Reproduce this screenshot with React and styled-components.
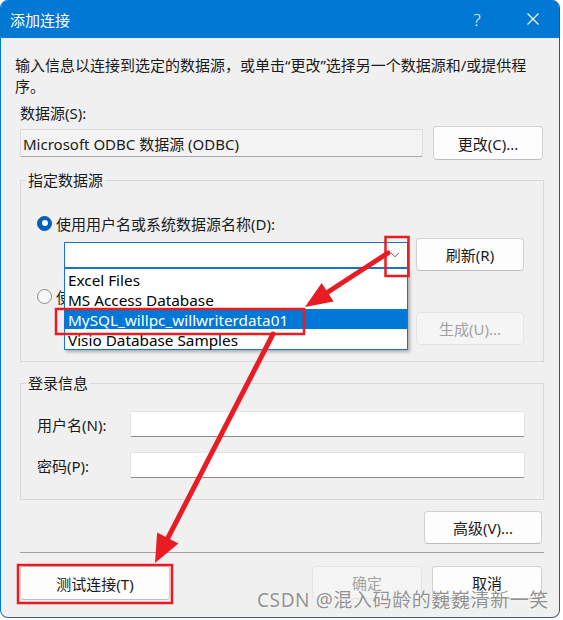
import React from "react";
import styled, { createGlobalStyle } from "styled-components";

const GlobalStyle = createGlobalStyle`
  html, body {
    margin: 0;
    padding: 0;
    background: #ffffff;
  }
  body {
    font-family: "Segoe UI", "Noto Sans", "Noto Sans CJK SC", sans-serif;
    color: #1b1b1b;
  }
`;

const Page = styled.div`
  position: relative;
  width: 563px;
  height: 620px;
`;

const Window = styled.div`
  width: 560px;
  height: 618px;
  box-sizing: border-box;
  display: flex;
  flex-direction: column;
  background: #f0f0f0;
  border: 1px solid #0078d4;
  border-top: none;
  border-right-color: #4d4d4d;
  border-bottom-color: #3c5f86;
  border-radius: 8px;
  overflow: hidden;
`;

const TitleBar = styled.div`
  height: 38px;
  flex: none;
  display: flex;
  align-items: center;
  background: #0078d4;
  color: #ffffff;
  padding-left: 10px;
  margin: 0 -1px;
`;

const TitleText = styled.div`
  font-size: 15px;
  line-height: 20px;
  margin-top: 1px;
`;

const CaptionButton = styled.div`
  width: 46px;
  height: 38px;
  display: flex;
  align-items: center;
  justify-content: center;
  margin-left: ${(p) => p.$gap || 0}px;
  margin-right: ${(p) => p.$right || 0}px;
  font-size: 17px;
  font-weight: 300;
`;

const Body = styled.div`
  flex: 1;
  padding: 0 15px 0 19px;
  font-size: 15px;
`;

const Description = styled.div`
  width: 518px;
  margin: 17px 0 0 -5px;
  line-height: 21px;
`;

const FieldLabel = styled.div`
  margin-top: 6px;
  line-height: 21px;
`;

const SourceRow = styled.div`
  margin-top: 2px;
  height: 34px;
  display: flex;
  align-items: center;
  gap: 10px;
`;

const ReadonlyField = styled.div`
  width: 403px;
  height: 28px;
  box-sizing: border-box;
  padding-left: 2px;
  display: flex;
  align-items: center;
  background: #f3f3f3;
  border: 1px solid #dadada;
  border-bottom-color: #a8a8a8;
  border-radius: 2px;
`;

const Button = styled.div`
  width: ${(p) => p.$width}px;
  height: ${(p) => p.$height || 33}px;
  box-sizing: border-box;
  display: flex;
  align-items: center;
  justify-content: center;
  background: ${(p) => (p.$disabled ? "#f5f5f5" : "#fdfdfd")};
  color: ${(p) => (p.$disabled ? "#a2a2a2" : "#1b1b1b")};
  border: 1px solid ${(p) => (p.$disabled ? "#e3e3e3" : "#d0d0d0")};
  border-bottom-color: ${(p) => (p.$disabled ? "#e3e3e3" : "#bdbdbd")};
  border-radius: 4px;
  font-size: 15px;
  margin-right: ${(p) => p.$right || 0}px;
`;

const GroupBox = styled.fieldset`
  margin: ${(p) => p.$top}px 0 0;
  padding: 0;
  min-width: 0;
  border: 1px solid #d9d9d9;
`;

const GroupLegend = styled.legend`
  margin-left: 5px;
  padding: 0 2px;
  line-height: 22px;
  font-size: 15px;
`;

const GroupInner = styled.div`
  padding: ${(p) => p.$pad};
`;

const RadioRow = styled.div`
  margin-top: ${(p) => p.$top || 0}px;
  height: 22px;
  display: flex;
  align-items: center;
  gap: 4px;
  white-space: nowrap;
`;

const RadioDot = styled.span`
  width: 15px;
  height: 15px;
  box-sizing: border-box;
  border-radius: 50%;
  flex: none;
  background: ${(p) => (p.$checked ? "#005fb8" : "#f7f7f7")};
  border: 1px solid ${(p) => (p.$checked ? "#005fb8" : "#8a8a8a")};
  display: flex;
  align-items: center;
  justify-content: center;

  &::after {
    content: "";
    display: ${(p) => (p.$checked ? "block" : "none")};
    width: 6px;
    height: 6px;
    border-radius: 50%;
    background: #ffffff;
  }
`;

const ComboRow = styled.div`
  margin-top: 4px;
  height: 33px;
  display: flex;
  align-items: flex-start;
  padding-left: 27px;
  gap: 8px;
`;

const ComboWrap = styled.div`
  position: relative;
  margin-top: 4px;
  width: 344px;
`;

const ComboBox = styled.div`
  height: 26px;
  box-sizing: border-box;
  background: #ffffff;
  border: 1px solid #1a73c9;
  display: flex;
  align-items: center;
  justify-content: flex-end;
  padding-right: 7px;
`;

const DropList = styled.div`
  position: absolute;
  z-index: 5;
  left: 0;
  top: 26px;
  width: 344px;
  box-sizing: border-box;
  background: #ffffff;
  border: 1px solid #1a73c9;
  box-shadow: 2px 2px 3px rgba(0, 0, 0, 0.28);
`;

const DropItem = styled.div`
  height: 20px;
  box-sizing: border-box;
  padding: 1px 0 0 3px;
  line-height: 20px;
  font-size: 15.3px;
  white-space: nowrap;
  background: ${(p) => (p.$selected ? "#0078d7" : "transparent")};
  color: ${(p) => (p.$selected ? "#ffffff" : "#000000")};
`;

const ActionRow = styled.div`
  margin-top: ${(p) => p.$top || 0}px;
  display: flex;
  justify-content: ${(p) => p.$justify || "flex-end"};
  gap: 10px;
`;

const FormRow = styled.div`
  margin-top: ${(p) => p.$top}px;
  height: 26px;
  display: flex;
  align-items: center;
`;

const FormLabel = styled.div`
  width: 93px;
  flex: none;
`;

const TextInput = styled.div`
  width: 395px;
  height: 26px;
  box-sizing: border-box;
  background: #ffffff;
  border: 1px solid #e4e4e4;
  border-bottom-color: #8c8c8c;
  border-radius: 2px;
`;

const Separator = styled.div`
  margin-top: 8px;
  height: 1px;
  background: #a0a0a0;
`;

const Spacer = styled.div`
  flex: 1;
`;

const Watermark = styled.div`
  position: absolute;
  left: 257px;
  top: 589px;
  font-size: 19px;
  line-height: 22px;
  letter-spacing: 0.6px;
  white-space: nowrap;
  color: rgba(105, 105, 105, 0.72);
  text-shadow: 0 0 2px rgba(255, 255, 255, 0.9);
`;

const Annotations = styled.svg`
  position: absolute;
  left: 0;
  top: 0;
  pointer-events: none;
  z-index: 10;
`;

const RED = "#e91c24";

function Arrow({ x1, y1, x2, y2, len, half }) {
  const dx = x2 - x1;
  const dy = y2 - y1;
  const l = Math.hypot(dx, dy);
  const ux = dx / l;
  const uy = dy / l;
  const bx = x2 - ux * len;
  const by = y2 - uy * len;
  const px = -uy;
  const py = ux;
  const pts = `${x2},${y2} ${bx + px * half},${by + py * half} ${bx - px * half},${by - py * half}`;
  return (
    <g>
      <line x1={x1} y1={y1} x2={bx} y2={by} stroke={RED} strokeWidth="5" strokeLinecap="round" />
      <polygon points={pts} fill={RED} />
    </g>
  );
}

export default function App() {
  return (
    <Page>
      <GlobalStyle />
      <Window>
        <TitleBar>
          <TitleText>添加连接</TitleText>
          <Spacer />
          <CaptionButton>?</CaptionButton>
          <CaptionButton $gap={10} $right={4}>
            <svg width="12" height="12" viewBox="0 0 12 12">
              <path d="M0.5 0.5 L11.5 11.5 M11.5 0.5 L0.5 11.5" stroke="#ffffff" strokeWidth="1.1" fill="none" />
            </svg>
          </CaptionButton>
        </TitleBar>

        <Body>
          <Description>
            输入信息以连接到选定的数据源，或单击“更改”选择另一个数据源和/或提供程序。
          </Description>
          <FieldLabel>数据源(S):</FieldLabel>
          <SourceRow>
            <ReadonlyField>Microsoft ODBC 数据源 (ODBC)</ReadonlyField>
            <Button $width={110} $height={34}>更改(C)...</Button>
          </SourceRow>

          <GroupBox $top={9}>
            <GroupLegend>指定数据源</GroupLegend>
            <GroupInner $pad="21px 19px 16px 16px">
              <RadioRow>
                <RadioDot $checked />
                使用用户名或系统数据源名称(D):
              </RadioRow>
              <ComboRow>
                <ComboWrap>
                  <ComboBox>
                    <svg width="10" height="6" viewBox="0 0 10 6">
                      <path d="M1 0.8 L5 4.8 L9 0.8" stroke="#5f5f5f" strokeWidth="1" fill="none" />
                    </svg>
                  </ComboBox>
                  <DropList>
                    <DropItem>Excel Files</DropItem>
                    <DropItem>MS Access Database</DropItem>
                    <DropItem $selected>MySQL_willpc_willwriterdata01</DropItem>
                    <DropItem>Visio Database Samples</DropItem>
                  </DropList>
                </ComboWrap>
                <Button $width={108}>刷新(R)</Button>
              </ComboRow>
              <RadioRow $top={14}>
                <RadioDot />
                使用连接字符串(S):
              </RadioRow>
              <ActionRow $top={5}>
                <Button $width={108} $disabled>生成(U)...</Button>
              </ActionRow>
            </GroupInner>
          </GroupBox>

          <GroupBox $top={10}>
            <GroupLegend>登录信息</GroupLegend>
            <GroupInner $pad="17px 18px 21px 16px">
              <FormRow $top={0}>
                <FormLabel>用户名(N):</FormLabel>
                <TextInput />
              </FormRow>
              <FormRow $top={15}>
                <FormLabel>密码(P):</FormLabel>
                <TextInput />
              </FormRow>
            </GroupInner>
          </GroupBox>

          <ActionRow $top={11}>
            <Button $width={118} $right={2}>高级(V)...</Button>
          </ActionRow>
          <Separator />
          <ActionRow $top={13}>
            <Button $width={150} $height={34}>测试连接(T)</Button>
            <Spacer />
            <Button $width={110} $disabled>确定</Button>
            <Button $width={110} $right={2}>取消</Button>
          </ActionRow>
        </Body>
      </Window>

      <Watermark>CSDN @混入码龄的巍巍清新一笑</Watermark>

      <Annotations width="563" height="620" viewBox="0 0 563 620">
        <rect x="385.5" y="237" width="23" height="39" fill="none" stroke={RED} strokeWidth="2.5" />
        <rect x="56" y="309" width="248" height="25" fill="none" stroke={RED} strokeWidth="2.5" />
        <rect x="18" y="565" width="154" height="38" fill="none" stroke={RED} strokeWidth="2.5" />
        <Arrow x1={388} y1={253} x2={305} y2={307} len={27} half={11} />
        <Arrow x1={273} y1={334} x2={155} y2={563} len={28} half={12} />
      </Annotations>
    </Page>
  );
}
